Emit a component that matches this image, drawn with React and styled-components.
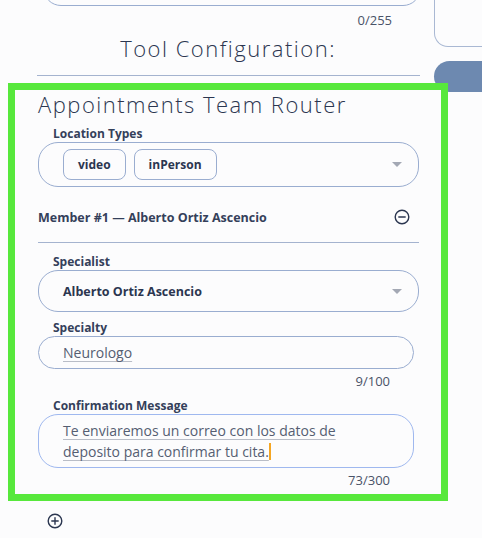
import React from 'react';
import styled, { createGlobalStyle } from 'styled-components';

const Global = createGlobalStyle`
  html, body {
    margin: 0;
    padding: 0;
    background: #fcfcfd;
    font-family: "Open Sans", Lato, sans-serif;
    color: #2b3650;
    overflow: hidden;
  }
`;

const Page = styled.div`
  display: flex;
  width: 482px;
  height: 538px;
  overflow: hidden;
`;

const Main = styled.div`
  width: 440px;
  margin-left: 8px;
  margin-right: -14px;
  display: flex;
  flex-direction: column;
  position: relative;
  z-index: 1;
`;

const Side = styled.div`
  flex: 1;
  display: flex;
  flex-direction: column;
  gap: 14px;
`;

const SideCard = styled.div`
  height: 47px;
  margin-top: -1px;
  border: 1px solid #a9b8d3;
  border-right: none;
  border-top: none;
  border-bottom-left-radius: 14px;
`;

const SidePill = styled.div`
  height: 31px;
  background: #6d89b0;
  border-radius: 16px 0 0 16px;
`;

const TopInput = styled.div`
  height: 40px;
  margin: -36px 27px 0 35px;
  border: 1px solid #9aadd0;
  border-radius: 0 0 18px 18px;
`;

const Counter = styled.div`
  text-align: right;
  font-size: 13px;
  color: #4a5368;
  padding-right: ${p => p.$right || 56}px;
  margin-top: ${p => p.$top || 4}px;
  line-height: 16px;
`;

const Heading = styled.h2`
  margin: ${p => p.$center ? '6px 0 0' : '0'};
  font-weight: 300;
  font-size: 22px;
  letter-spacing: 1.5px;
  line-height: 28px;
  text-align: ${p => p.$center ? 'center' : 'left'};
  color: #2b3650;
`;

const Rule = styled.hr`
  border: none;
  border-top: 1px solid #a4b3cf;
  margin: ${p => p.$m};
`;

const Highlight = styled.section`
  border: 7px solid #57e83c;
  padding: 0 22px 0 23px;
  height: 404px;
  display: flex;
  flex-direction: column;
`;

const Label = styled.div`
  font-size: 12px;
  font-weight: 700;
  color: #34405a;
  padding-left: 15px;
  line-height: 16px;
  margin-top: ${p => p.$top || 0}px;
`;

const SelectBox = styled.div`
  display: flex;
  align-items: center;
  gap: 8px;
  height: ${p => p.$h}px;
  box-sizing: border-box;
  border: 1px solid #9aadd0;
  border-radius: 20px;
  padding: 0 16px 0 24px;
  font-size: 12.5px;
  font-weight: 700;
  color: #2b3650;
`;

const Chip = styled.span`
  display: inline-flex;
  align-items: center;
  justify-content: center;
  height: 31px;
  box-sizing: border-box;
  padding: 0 14px;
  border: 1px solid #9aadd0;
  border-radius: 8px;
  font-size: 12px;
  font-weight: 700;
  color: #2b3650;
`;

const Caret = styled.span`
  margin-left: auto;
  width: 0;
  height: 0;
  border-left: 5px solid transparent;
  border-right: 5px solid transparent;
  border-top: 5px solid #a3a8b4;
`;

const MemberRow = styled.div`
  display: flex;
  align-items: center;
  justify-content: space-between;
  margin-top: 21px;
  height: 18px;
  font-size: 12.5px;
  font-weight: 700;
  color: #34405a;
  padding-right: 9px;
`;

const Field = styled.div`
  margin-right: 5px;
  box-sizing: border-box;
  border: 1px solid ${p => p.$focus ? '#9fb8ef' : '#9aadd0'};
  border-radius: ${p => p.$focus ? 20 : 17}px;
  min-height: ${p => p.$h}px;
  padding: ${p => p.$pad};
  font-size: 14px;
  line-height: 21px;
  color: #555e72;
`;

const Typed = styled.span`
  text-decoration: underline;
  text-decoration-color: #b9bdc7;
  text-underline-offset: 3px;
`;

const Caret2 = styled.span`
  display: inline-block;
  width: 2px;
  height: 17px;
  background: #f5a623;
  vertical-align: -3px;
`;

const AddRow = styled.div`
  padding: 12px 0 0 39px;
  display: flex;
`;

const CircleIcon = ({ plus }) => (
  <svg width="16" height="16" viewBox="0 0 16 16" fill="none" stroke="#2b3650" strokeWidth="1.4" strokeLinecap="round">
    <circle cx="8" cy="8" r="6.8" />
    <line x1="4.8" y1="8" x2="11.2" y2="8" />
    {plus && <line x1="8" y1="4.8" x2="8" y2="11.2" />}
  </svg>
);

export default function App() {
  return (
    <Page>
      <Global />
      <Main>
        <TopInput />
        <Counter $top={6} $right={56}>0/255</Counter>
        <Heading $center>Tool Configuration:</Heading>
        <Rule $m="13px 28px 7px 29px" />
        <Highlight>
          <Heading>Appointments Team Router</Heading>
          <Label $top={8}>Location Types</Label>
          <SelectBox $h={45}>
            <Chip>video</Chip>
            <Chip>inPerson</Chip>
            <Caret />
          </SelectBox>
          <MemberRow>
            <span>Member #1 — Alberto Ortiz Ascencio</span>
            <CircleIcon />
          </MemberRow>
          <Rule $m="16px 0 0" />
          <Label $top={11}>Specialist</Label>
          <SelectBox $h={42}>
            <span>Alberto Ortiz Ascencio</span>
            <Caret />
          </SelectBox>
          <Label $top={8}>Specialty</Label>
          <Field $h={33} $pad="5px 24px">
            <Typed>Neurologo</Typed>
          </Field>
          <Counter $top={4} $right={29}>9/100</Counter>
          <Label $top={9}>Confirmation Message</Label>
          <Field $focus $h={54} $pad="5px 70px 5px 24px">
            <Typed>Te enviaremos un correo con los datos de deposito para confirmar tu cita.</Typed>
            <Caret2 />
          </Field>
          <Counter $top={4} $right={29}>73/300</Counter>
        </Highlight>
        <AddRow>
          <CircleIcon plus />
        </AddRow>
      </Main>
      <Side>
        <SideCard />
        <SidePill />
      </Side>
    </Page>
  );
}
